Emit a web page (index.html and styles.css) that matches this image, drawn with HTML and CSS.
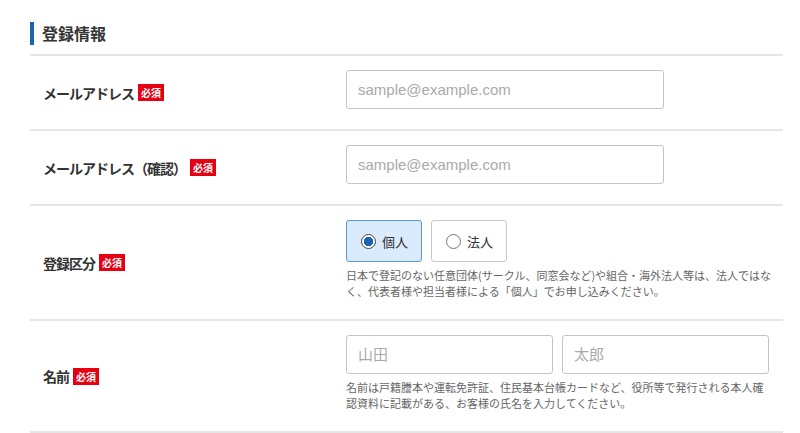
FILE: index.html
```html
<!DOCTYPE html>
<html lang="ja">
<head>
    <meta charset="UTF-8">
    <meta name="viewport" content="width=device-width, initial-scale=1.0">
    <title>登録情報</title>
    <link rel="stylesheet" href="styles.css">
</head>
<body>
    <div class="form">
        <div class="form-head">
            <h2>登録情報</h2>
        </div>

        <div class="row">
            <div class="label">メールアドレス<span class="req">必須</span></div>
            <div class="field">
                <input type="email" class="text-input email" placeholder="sample@example.com">
            </div>
        </div>

        <div class="row">
            <div class="label">メールアドレス（確認）<span class="req">必須</span></div>
            <div class="field">
                <input type="email" class="text-input email" placeholder="sample@example.com">
            </div>
        </div>

        <div class="row">
            <div class="label">登録区分<span class="req">必須</span></div>
            <div class="field">
                <div class="radios">
                    <label class="radio checked">
                        <input type="radio" name="kind" checked>
                        <span>個人</span>
                    </label>
                    <label class="radio">
                        <input type="radio" name="kind">
                        <span>法人</span>
                    </label>
                </div>
                <p class="note">日本で登記のない任意団体(サークル、同窓会など)や組合・海外法人等は、法人ではなく、代表者様や担当者様による「個人」でお申し込みください。</p>
            </div>
        </div>

        <div class="row">
            <div class="label">名前<span class="req">必須</span></div>
            <div class="field">
                <div class="name-inputs">
                    <input type="text" class="text-input" placeholder="山田">
                    <input type="text" class="text-input" placeholder="太郎">
                </div>
                <p class="note">名前は戸籍謄本や運転免許証、住民基本台帳カードなど、役所等で発行される本人確認資料に記載がある、お客様の氏名を入力してください。</p>
            </div>
        </div>
    </div>
</body>
</html>
```

FILE: styles.css
```css
* {
    margin: 0;
    padding: 0;
    box-sizing: border-box;
}

body {
    font-family: "Noto Sans CJK JP", "Noto Sans", sans-serif;
    color: #333;
    background: #fff;
}

.form {
    margin: 0 17px 0 30px;
}

.form-head {
    padding: 22px 0 9px;
    border-bottom: 2px solid #e6e6e6;
}

.form-head h2 {
    border-left: 4px solid #1d63ae;
    padding-left: 8px;
    font-size: 16px;
    line-height: 23px;
    font-weight: bold;
}

.row {
    display: flex;
    align-items: center;
    border-bottom: 2px solid #e6e6e6;
}

.label {
    width: 316px;
    flex-shrink: 0;
    padding-left: 13px;
    font-size: 14px;
    letter-spacing: -1px;
    font-weight: bold;
    display: flex;
    align-items: center;
}

.req {
    display: inline-block;
    margin-left: 4px;
    background: #e60012;
    color: #fff;
    font-size: 10px;
    font-weight: bold;
    letter-spacing: 0;
    line-height: 17px;
    height: 17px;
    padding: 0 3px;
}

.field {
    flex: 1;
    padding: 14px 0 20px;
}

.text-input {
    height: 39px;
    border: 1px solid #c4c4c4;
    border-radius: 3px;
    padding: 0 11px;
    font-size: 15px;
    font-family: "Liberation Sans", "Noto Sans CJK JP", sans-serif;
    color: #333;
    outline: none;
}

.text-input::placeholder {
    color: #aaa;
}

.email {
    width: 318px;
}

.name-inputs {
    display: flex;
    gap: 9px;
    width: 423px;
}

.name-inputs .text-input {
    flex: 1;
    min-width: 0;
}

.radios {
    display: flex;
    gap: 9px;
}

.radio {
    display: flex;
    align-items: center;
    gap: 6px;
    width: 76px;
    height: 42px;
    padding-left: 14px;
    border: 1px solid #c8c8c8;
    border-radius: 3px;
    font-size: 13px;
    cursor: pointer;
}

.radio.checked {
    background: #d9ebfd;
    border-color: #5a9ad6;
}

.radio input {
    appearance: none;
    width: 15px;
    height: 15px;
    border: 1px solid #777;
    border-radius: 50%;
    background: #fff;
    margin: 0;
}

.radio input:checked {
    border-color: #444;
    background: radial-gradient(circle, #1e62b4 0 4.5px, #fff 5px);
}

.note {
    max-width: 427px;
    margin-top: 5px;
    font-size: 11px;
    line-height: 16px;
    color: #666;
}
```
